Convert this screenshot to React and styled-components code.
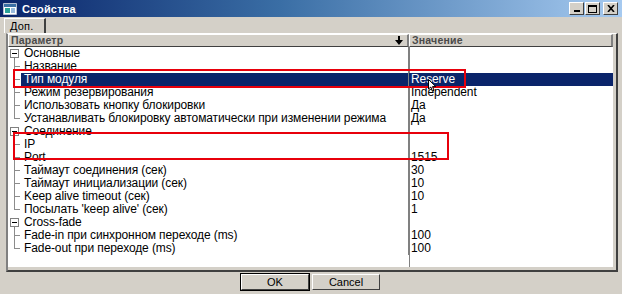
import React from "react";
import styled, { createGlobalStyle } from "styled-components";

const GlobalStyle = createGlobalStyle`
  html, body { margin: 0; padding: 0; background: #d4d0c8; }
  body { font-family: "Liberation Sans", Arial, sans-serif; }
`;

const groups = [
  {
    title: "Основные",
    items: [
      ["Название", ""],
      ["Тип модуля", "Reserve", true],
      ["Режим резервирования", "Independent"],
      ["Использовать кнопку блокировки", "Да"],
      ["Устанавливать блокировку автоматически при изменении режима", "Да"],
    ],
  },
  {
    title: "Соединение",
    items: [
      ["IP", ""],
      ["Port", "1515"],
      ["Таймаут соединения (сек)", "30"],
      ["Таймаут инициализации (сек)", "10"],
      ["Keep alive timeout (сек)", "10"],
      ["Посылать 'keep alive' (сек)", "1"],
    ],
  },
  {
    title: "Cross-fade",
    items: [
      ["Fade-in при синхронном переходе (ms)", "100"],
      ["Fade-out при переходе (ms)", "100"],
    ],
  },
];

export default function App() {
  return (
    <Window>
      <GlobalStyle />
      <TitleBar>
        <AppIcon />
        <Title>Свойства</Title>
        <Caption>
          <CapButton>
            <svg width="8" height="7"><rect x="1" y="5" width="6" height="2" fill="#000" /></svg>
          </CapButton>
          <CapButton>
            <svg width="9" height="8"><rect x="0.5" y="0.5" width="8" height="7" fill="none" stroke="#000" /><rect x="0" y="0" width="9" height="2" fill="#000" /></svg>
          </CapButton>
          <CapButton $close>
            <svg width="8" height="7"><path d="M1 0 L7 7 M7 0 L1 7" stroke="#000" strokeWidth="1.6" /></svg>
          </CapButton>
        </Caption>
      </TitleBar>
      <TabStrip>
        <Tab>Доп.</Tab>
      </TabStrip>
      <Panel>
        <Grid>
          <HeadRow>
            <HeadCell>
              Параметр
              <SortArrow />
            </HeadCell>
            <HeadCell>Значение</HeadCell>
          </HeadRow>
          {groups.map((g) => (
            <React.Fragment key={g.title}>
              <Row>
                <NameCell>
                  <Branch kind="group" />
                  <Label>{g.title}</Label>
                </NameCell>
                <ValueCell />
              </Row>
              {g.items.map(([name, value, sel], i) => (
                <Row key={name}>
                  <NameCell>
                    <Branch kind={i === g.items.length - 1 ? "last" : "child"} />
                    <Label $selected={sel}>{name}</Label>
                  </NameCell>
                  <ValueCell $selected={sel}>{value}</ValueCell>
                </Row>
              ))}
            </React.Fragment>
          ))}
        </Grid>
      </Panel>
      <ButtonRow>
        <Button $default>OK</Button>
        <Button>Cancel</Button>
      </ButtonRow>
      <Mark style={{ left: 13, top: 69, width: 453, height: 19 }} />
      <Mark style={{ left: 13, top: 132, width: 436, height: 28 }} />
      <Cursor />
    </Window>
  );
}

function Branch({ kind }) {
  return (
    <svg width="13" height="13" style={{ flex: "none" }}>
      {kind === "group" && (
        <g>
          <rect x="2.5" y="2.5" width="8" height="8" fill="#fff" stroke="#808080" />
          <line x1="4" y1="6.5" x2="9" y2="6.5" stroke="#000" />
          <line x1="6.5" y1="11" x2="6.5" y2="13" stroke="#808080" />
        </g>
      )}
      {kind !== "group" && (
        <g stroke="#8c8c8c">
          <line x1="6.5" y1="0" x2="6.5" y2={kind === "last" ? 7 : 13} />
          <line x1="7" y1="6.5" x2="12" y2="6.5" />
        </g>
      )}
    </svg>
  );
}

function SortArrow() {
  return (
    <ArrowBox>
      <svg width="8" height="9">
        <path d="M3 0 H5 V4 H8 L4 9 L0 4 H3 Z" fill="#000" />
      </svg>
    </ArrowBox>
  );
}

function AppIcon() {
  return (
    <svg width="14" height="12" style={{ flex: "none" }}>
      <rect x="0" y="0" width="14" height="12" fill="#fff" stroke="#6a7fa8" />
      <rect x="1" y="1" width="12" height="3" fill="#3a6ea5" />
      <rect x="2" y="5" width="5" height="5" fill="#2aa198" />
      <rect x="8" y="5" width="4" height="5" fill="#9bd" />
    </svg>
  );
}

function Cursor() {
  return (
    <CursorBox>
      <svg width="9" height="13">
        <path d="M0.5 0.5 L0.5 10 L2.8 8 L4.4 12 L6 11.3 L4.5 7.6 L7.8 7.6 Z" fill="#fff" stroke="#000" strokeWidth="1" />
      </svg>
    </CursorBox>
  );
}

const Window = styled.div`
  position: relative;
  width: 622px;
  height: 294px;
  display: flex;
  flex-direction: column;
  background: #d4d0c8;
  overflow: hidden;
`;

const TitleBar = styled.div`
  height: 17px;
  display: flex;
  align-items: center;
  gap: 5px;
  padding: 0 4px 0 3px;
  background: linear-gradient(to right, #0a246a 0%, #3a6ea5 45%, #a6caf0 100%);
`;

const Title = styled.div`
  flex: 1;
  color: #fff;
  font-weight: bold;
  font-size: 11px;
  letter-spacing: 0.2px;
`;

const Caption = styled.div`
  display: flex;
  gap: 1px;
`;

const CapButton = styled.div`
  width: 13px;
  height: 11px;
  margin-left: ${(p) => (p.$close ? "2px" : "0")};
  display: flex;
  align-items: center;
  justify-content: center;
  background: #d4d0c8;
  border-top: 1px solid #fff;
  border-left: 1px solid #fff;
  border-right: 1px solid #404040;
  border-bottom: 1px solid #404040;
`;

const TabStrip = styled.div`
  height: 16px;
  display: flex;
  align-items: flex-end;
  padding-left: 4px;
`;

const Tab = styled.div`
  width: 34px;
  height: 14px;
  padding-left: 5px;
  font-size: 11px;
  line-height: 14px;
  color: #000;
  letter-spacing: 0.2px;
  border-top: 1px solid #fff;
  border-left: 1px solid #fff;
  border-right: 2px solid #404040;
`;

const Panel = styled.div`
  height: 239px;
  margin: 0 4px 0 6px;
  padding: 0 3px 3px 0;
  border-top: 1px solid #fff;
  border-left: 2px solid #808080;
  border-right: 2px solid #404040;
  border-bottom: 2px solid #404040;
  background: #d4d0c8;
  box-sizing: border-box;
  display: flex;
`;

const Grid = styled.div`
  flex: 1;
  display: grid;
  grid-template-columns: 401px 1fr;
  grid-auto-rows: 13px;
  align-content: start;
  font-size: 12px;
  line-height: 13px;
  letter-spacing: -0.1px;
  color: #000;
  background-image: linear-gradient(#808080, #808080);
  background-size: 1px 100%;
  background-position: 401px 0;
  background-repeat: no-repeat;
  background-color: #fff;
`;

const HeadRow = styled.div`
  display: contents;
`;

const HeadCell = styled.div`
  height: 13px;
  display: flex;
  align-items: center;
  padding-left: 2px;
  background: #d4d0c8;
  border-top: 1px solid #fff;
  border-left: 1px solid #fff;
  border-bottom: 1px solid #404040;
  border-right: 2px solid #808080;
  box-sizing: border-box;
  font-weight: bold;
  font-size: 10.5px;
  color: #4a4a4a;
  letter-spacing: 0.2px;
`;

const ArrowBox = styled.span`
  margin-left: auto;
  margin-right: 4px;
  display: flex;
`;

const Row = styled.div`
  display: contents;
`;

const NameCell = styled.div`
  display: flex;
  align-items: center;
  white-space: nowrap;
  border-right: 1px solid #808080;
`;

const Label = styled.div`
  flex: 1;
  height: 13px;
  padding-left: 3px;
  background: ${(p) => (p.$selected ? "#0a246a" : "transparent")};
  color: ${(p) => (p.$selected ? "#fff" : "#000")};
`;

const ValueCell = styled.div`
  padding-left: 2px;
  white-space: nowrap;
  background: ${(p) => (p.$selected ? "#0a246a" : "transparent")};
  color: ${(p) => (p.$selected ? "#fff" : "#000")};
`;

const ButtonRow = styled.div`
  flex: 1;
  display: flex;
  justify-content: center;
  align-items: flex-start;
  gap: 3px;
  padding-top: 2px;
  padding-right: 1px;
`;

const Button = styled.div`
  width: 66px;
  height: 14px;
  display: flex;
  align-items: center;
  justify-content: center;
  font-size: 11px;
  color: #000;
  background: #d4d0c8;
  border-top: 1px solid #fff;
  border-left: 1px solid #fff;
  border-right: 1px solid #404040;
  border-bottom: 1px solid #404040;
  outline: ${(p) => (p.$default ? "1px solid #000" : "none")};
`;

const Mark = styled.div`
  position: absolute;
  box-sizing: border-box;
  border: 2px solid #e8000b;
  pointer-events: none;
`;

const CursorBox = styled.div`
  position: absolute;
  left: 428px;
  top: 79px;
  display: flex;
`;
